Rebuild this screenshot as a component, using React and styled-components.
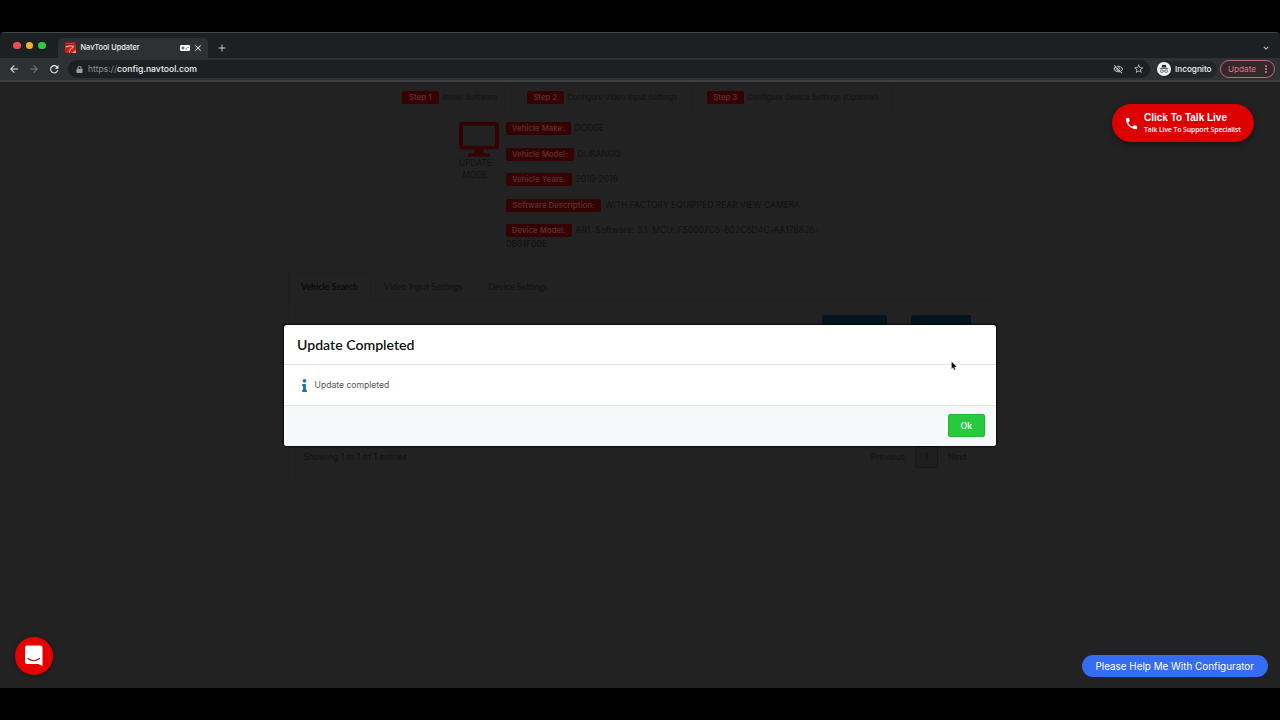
import React from "react";
import styled, { createGlobalStyle } from "styled-components";
import {
  MdArrowBack,
  MdArrowForward,
  MdRefresh,
  MdOutlineVisibilityOff,
  MdStarBorder,
  MdMoreVert,
  MdClose,
  MdAdd,
  MdKeyboardArrowDown,
  MdPhone,
} from "react-icons/md";
import { FaInfo, FaLock } from "react-icons/fa";

const steps = [
  { label: "Step 1", text: "Install Software", width: 125 },
  { label: "Step 2", text: "Configure Video Input Settings", width: 180 },
  { label: "Step 3", text: "Configure Device Settings (Optional)", width: 200 },
];

const details = [
  { label: "Vehicle Make:", text: "DODGE", width: 64.5 },
  { label: "Vehicle Model:", text: "DURANGO", width: 67.5 },
  { label: "Vehicle Years:", text: "2010-2016", width: 65.5 },
  {
    label: "Software Description:",
    text: "WITH FACTORY EQUIPPED REAR VIEW CAMERA",
    width: 95,
  },
  {
    label: "Device Model:",
    text: "AR1 \u00a0Software: 3.1 \u00a0MCU: F50007C5-602C6D4C-AA178826-",
    rest: "0B01F00E",
    width: 65.5,
    spacing: 0.06,
  },
];

export default function App() {
  return (
    <>
      <GlobalStyle />
      <Screen>
        <Browser>
          <TabStrip>
            <Lights>
              <Light $color="#ee4b55" />
              <Light $color="#f6b02f" />
              <Light $color="#2fcb45" />
            </Lights>
            <BrowserTab>
              <Favicon />
              <TabTitle>NavTool Updater</TabTitle>
              <Gamepad />
              <MdClose size={10} color="#e8eaed" />
            </BrowserTab>
            <NewTab>
              <MdAdd size={12} />
            </NewTab>
            <TabSearch>
              <MdKeyboardArrowDown size={10} />
            </TabSearch>
          </TabStrip>
          <Toolbar>
            <NavIcons>
              <MdArrowBack size={12} color="#e8eaed" />
              <MdArrowForward size={12} color="#73767a" />
              <MdRefresh size={12.5} color="#e8eaed" />
            </NavIcons>
            <AddressBar>
              <FaLock size={7} color="#9aa0a6" />
              <Url>
                https://<Host>config.navtool.com</Host>
              </Url>
              <AddressIcons>
                <MdOutlineVisibilityOff size={10.5} />
                <MdStarBorder size={11.5} />
              </AddressIcons>
            </AddressBar>
            <Incognito>
              <IncognitoIcon />
              Incognito
            </Incognito>
            <UpdateButton>
              Update
              <MdMoreVert size={12} />
            </UpdateButton>
          </Toolbar>

          <Page>
            <Steps>
              {steps.map((step) => (
                <Step key={step.label} $width={step.width}>
                  <Badge $width={36.5}>{step.label}</Badge>
                  <StepText>{step.text}</StepText>
                </Step>
              ))}
            </Steps>

            <Device>
              <Mode>
                <MonitorIcon />
                <ModeText>UPDATE MODE</ModeText>
              </Mode>
              <Details>
                {details.map((item) => (
                  <Detail key={item.label} $spacing={item.spacing}>
                    <DetailLine>
                      <Badge $width={item.width}>{item.label}</Badge>
                      <span>{item.text}</span>
                    </DetailLine>
                    {item.rest}
                  </Detail>
                ))}
              </Details>
            </Device>

            <Tabs>
              <TabItem $active $width={83}>
                Vehicle Search
              </TabItem>
              <TabItem $width={104}>Video Input Settings</TabItem>
              <TabItem $width={85}>Device Settings</TabItem>
            </Tabs>
            <Panel>
              <PanelRow>
                <RowButton $width={65} />
                <RowButton $width={60} />
              </PanelRow>
              <PanelFooter>
                <Entries>Showing 1 to 1 of 1 entries</Entries>
                <Pager>
                  Previous
                  <PageNumber>1</PageNumber>
                  Next
                </Pager>
              </PanelFooter>
            </Panel>

            <Modal>
              <ModalHeader>Update Completed</ModalHeader>
              <ModalBody>
                <FaInfo size={13} color="#1b75a6" />
                <Message>Update completed</Message>
              </ModalBody>
              <ModalFooter>
                <OkButton>Ok</OkButton>
              </ModalFooter>
            </Modal>

            <TalkLive>
              <MdPhone size={15} />
              <div>
                <TalkTitle>Click To Talk Live</TalkTitle>
                <TalkText>Talk Live To Support Specialist</TalkText>
              </div>
            </TalkLive>
            <ChatButton>
              <ChatIcon />
            </ChatButton>
            <HelpButton>Please Help Me With Configurator</HelpButton>
            <Cursor />
          </Page>
        </Browser>
      </Screen>
    </>
  );
}

function Favicon() {
  return (
    <svg width="11" height="11" viewBox="0 0 11 11">
      <rect width="11" height="11" rx="1" fill="#c5211d" />
      <rect width="11" height="2.6" fill="#8c1513" />
      <path d="M1 1.4h9" stroke="#e98a80" strokeWidth=".7" strokeDasharray="1.2 .5" />
      <path d="M.8 5Q4 3.400 8.400 4.200Q8.600 6 5.400 7L4.400 10.400" fill="none" stroke="#f5c8bd" strokeWidth="1" />
      <path d="M6.500 11L11 8v3z" fill="#e9a24b" />
    </svg>
  );
}

function Gamepad() {
  return (
    <GamepadSvg width="10" height="6" viewBox="0 0 10 6">
      <rect width="10" height="6" rx="1.2" fill="#fff" />
      <path d="M1.5 3h3M3 1.5v3" stroke="#2d3033" strokeWidth=".9" />
      <circle cx="6.3" cy="3.8" r=".65" fill="#2d3033" />
      <circle cx="8" cy="2.3" r=".65" fill="#2d3033" />
    </GamepadSvg>
  );
}

function IncognitoIcon() {
  return (
    <svg width="14" height="14" viewBox="0 0 14 14">
      <circle cx="7" cy="7" r="7" fill="#f1f3f4" />
      <path d="M4.5 5.6l.8-2.6q.2-.5.7-.3l1 .3 1-.3q.5-.2.7.3l.8 2.6z" fill="#26282b" />
      <path d="M2.7 6.6h8.6" stroke="#26282b" strokeWidth=".8" />
      <circle cx="4.8" cy="9.2" r="1.35" fill="none" stroke="#26282b" strokeWidth=".6" />
      <circle cx="9.2" cy="9.2" r="1.35" fill="none" stroke="#26282b" strokeWidth=".6" />
      <path d="M6.1 9q.9-.5 1.8 0" fill="none" stroke="#26282b" strokeWidth=".6" />
    </svg>
  );
}

function MonitorIcon() {
  return (
    <svg width="40" height="35" viewBox="0 0 40 35">
      <path
        fillRule="evenodd"
        d="M3 0h34a3 3 0 0 1 3 3v21.500a3 3 0 0 1-3 3H3a3 3 0 0 1-3-3V3a3 3 0 0 1 3-3zM4 3.800v20h32v-20z"
        fill="#350204"
      />
      <path d="M16 27h8l.8 4.200h4.700a1.700 1.700 0 0 1 0 3.400h-19a1.700 1.700 0 0 1 0-3.400h4.700z" fill="#350204" />
    </svg>
  );
}

function ChatIcon() {
  return (
    <svg width="20" height="22" viewBox="0 0 20 22">
      <path d="M3 .5h13.500a2 2 0 0 1 2 2V21l-4.200-2H3a2 2 0 0 1-2-2V2.500a2 2 0 0 1 2-2z" fill="#fff" />
      <path d="M4 13.500q5.700 4.400 11.500 0" fill="none" stroke="#a30d0d" strokeWidth="1.100" strokeLinecap="round" />
    </svg>
  );
}

function Cursor() {
  return (
    <CursorSvg width="7" height="10" viewBox="0 0 7 10">
      <path d="M.5.5v7.400l1.600-1.500 1.100 2.700 1.300-.6-1.100-2.500h2.400z" fill="#000" stroke="#fff" strokeWidth=".3" />
    </CursorSvg>
  );
}

const GlobalStyle = createGlobalStyle`
  * {
    box-sizing: border-box;
  }
  body {
    margin: 0;
    background: #000;
    font-family: Inter, "Liberation Sans", sans-serif;
  }
  svg {
    display: block;
    flex-shrink: 0;
  }
`;

const Screen = styled.div`
  width: 1280px;
  height: 720px;
  padding: 32px 0;
  background: #000;
  overflow: hidden;
`;
const Browser = styled.div`
  display: flex;
  flex-direction: column;
  height: 656px;
  border-top: 1px solid #45484a;
  border-radius: 5px 5px 0 0;
  background: #1d2022;
  overflow: hidden;
`;

const TabStrip = styled.div`
  display: flex;
  align-items: flex-end;
  height: 25px;
  padding-left: 13px;
`;
const Lights = styled.div`
  display: flex;
  align-items: center;
  gap: 5px;
  height: 25px;
  width: 45px;
`;
const Light = styled.span`
  width: 7.6px;
  height: 7.6px;
  border-radius: 50%;
  background: ${(props) => props.$color};
`;
const BrowserTab = styled.div`
  display: flex;
  align-items: center;
  width: 150px;
  height: 20px;
  padding: 0 5px 1px 7px;
  border-radius: 5px 5px 0 0;
  background: #2e3134;
`;
const TabTitle = styled.span`
  flex: 1;
  margin: 0 0 1px 4.5px;
  color: #f1f3f4;
  font-size: 7.4px;
  font-weight: 500;
`;
const GamepadSvg = styled.svg`
  margin-right: 3px;
`;
const NewTab = styled.div`
  margin: 0 0 4px 8px;
  color: #c6c9cc;
`;
const TabSearch = styled.div`
  margin: 0 9px 5px auto;
  color: #d5d7da;
`;

const Toolbar = styled.div`
  display: flex;
  align-items: center;
  height: 24px;
  padding: 0 5px 0 8px;
  border-bottom: 2px solid #3d4042;
  background: #2e3134;
`;
const NavIcons = styled.div`
  display: flex;
  gap: 8px;
  width: 60px;
`;
const AddressBar = styled.div`
  display: flex;
  align-items: center;
  width: 1082px;
  height: 18px;
  padding: 0 6px 0 7.5px;
  border-radius: 9px;
  background: #1d2022;
`;
const Url = styled.span`
  margin-left: 5.5px;
  color: #8b8f93;
  font-size: 8.65px;
`;
const Host = styled.span`
  color: #f1f3f4;
  font-weight: 500;
`;
const AddressIcons = styled.div`
  display: flex;
  align-items: center;
  gap: 9px;
  margin-left: auto;
  color: #c6c9cc;
`;
const Incognito = styled.div`
  display: flex;
  align-items: center;
  gap: 4.5px;
  width: 60px;
  height: 17px;
  margin-left: 6.5px;
  border-radius: 9px;
  background: #232629;
  color: #f1f3f4;
  font-size: 8.2px;
  font-weight: 500;
`;
const UpdateButton = styled.div`
  display: flex;
  align-items: center;
  justify-content: space-between;
  width: 55px;
  height: 18px;
  margin-left: 3.5px;
  padding: 0 2px 0 7px;
  border: 1px solid #bb6c74;
  border-radius: 9px;
  background: #35282c;
  color: #d77a83;
  font-size: 8.2px;
`;

const Page = styled.main`
  position: relative;
  flex: 1;
  background: #222;
  color: #111;
`;

const Steps = styled.div`
  display: flex;
  width: 505px;
  margin-left: 387px;
`;
const Step = styled.div`
  display: flex;
  align-items: center;
  width: ${(props) => props.$width}px;
  height: 30px;
  padding-left: 15px;
  border-right: 1px solid #202020;
`;
const StepText = styled.span`
  margin-left: 3.8px;
  font-size: 7.6px;
  white-space: nowrap;
`;
const Badge = styled.span`
  display: inline-flex;
  align-items: center;
  justify-content: center;
  flex-shrink: 0;
  width: ${(props) => props.$width}px;
  height: 13px;
  border-radius: 2px;
  background: #350204;
  color: #5c2c2e;
  font-size: 7.8px;
  font-weight: 600;
  letter-spacing: 0;
  white-space: nowrap;
`;

const Device = styled.div`
  display: flex;
  height: 161px;
  padding: 10px 0 0 459px;
`;
const Mode = styled.div`
  width: 47px;
`;
const ModeText = styled.div`
  width: 32px;
  margin-top: 1px;
  font-size: 8.4px;
  line-height: 11.7px;
  text-align: center;
`;
const Details = styled.div`
  display: flex;
  flex-direction: column;
  gap: 12px;
  width: 318px;
`;
const Detail = styled.div`
  font-size: 8.5px;
  letter-spacing: ${(props) => props.$spacing || 0}px;
  line-height: 13.5px;
`;
const DetailLine = styled.div`
  display: flex;
  align-items: center;
  gap: 4px;
  height: 13.5px;
  white-space: nowrap;
`;

const Tabs = styled.div`
  display: flex;
  width: 703px;
  height: 28px;
  margin-left: 288px;
  border-bottom: 1px solid #1e1e1e;
`;
const TabItem = styled.div`
  width: ${(props) => props.$width}px;
  height: 28px;
  padding-left: 12px;
  border: 1px solid ${(props) => (props.$active ? "#1f1f1f" : "transparent")};
  border-bottom-color: ${(props) => (props.$active ? "#222" : "transparent")};
  color: ${(props) => (props.$active ? "#0a0a0a" : "#111")};
  font-family: Lato, sans-serif;
  font-size: 8.8px;
  font-weight: ${(props) => (props.$active ? 700 : 400)};
  line-height: 26px;
  white-space: nowrap;
`;
const Panel = styled.div`
  width: 703px;
  height: 184px;
  margin-left: 288px;
  padding: 14px 19px 0 14.5px;
  border: 1px solid #202020;
  border-top: 0;
`;
const PanelRow = styled.div`
  display: flex;
  justify-content: flex-end;
  gap: 24px;
  height: 131px;
`;
const RowButton = styled.span`
  width: ${(props) => props.$width}px;
  height: 20px;
  border-radius: 2px;
  background: #06151d;
`;
const PanelFooter = styled.div`
  display: flex;
  align-items: center;
  justify-content: space-between;
  height: 22px;
  font-size: 8.4px;
`;
const Entries = styled.span`
  letter-spacing: 0.08px;
`;
const Pager = styled.div`
  display: flex;
  align-items: center;
  gap: 10px;
  margin-right: 4.5px;
`;
const PageNumber = styled.span`
  width: 23px;
  height: 22px;
  border: 1px solid #181818;
  border-radius: 1px;
  background: #1e1e1e;
  line-height: 20px;
  text-align: center;
`;

const Modal = styled.section`
  position: absolute;
  top: 243px;
  left: 284px;
  width: 712px;
  height: 121px;
  border-radius: 3px;
  background: #fff;
  box-shadow: 0 0 2px 1px rgba(0, 0, 0, 0.75);
  overflow: hidden;
`;
const ModalHeader = styled.h2`
  height: 40px;
  margin: 0;
  padding-left: 13px;
  border-bottom: 1px solid #dfe3e4;
  color: #111;
  font-family: Lato, sans-serif;
  font-size: 14.1px;
  font-weight: 600;
  line-height: 40px;
`;
const ModalBody = styled.div`
  display: flex;
  align-items: center;
  gap: 3.5px;
  height: 41px;
  padding-left: 14px;
  border-bottom: 1px solid #dfe3e4;
`;
const Message = styled.span`
  margin-bottom: 1px;
  color: #555;
  font-size: 8.6px;
`;
const ModalFooter = styled.div`
  display: flex;
  align-items: center;
  justify-content: flex-end;
  height: 40px;
  padding: 0 11px 1px 0;
  background: #f6f9fa;
`;
const OkButton = styled.button`
  width: 37.5px;
  height: 23px;
  padding: 0;
  border: 1px solid #22b934;
  border-radius: 2px;
  background: #27c93f;
  color: #fff;
  font-family: Inter, sans-serif;
  font-size: 8.8px;
  font-weight: 500;
`;

const TalkLive = styled.div`
  position: absolute;
  top: 22px;
  right: 26px;
  display: flex;
  align-items: center;
  gap: 5.5px;
  width: 142px;
  height: 38px;
  padding-left: 11.5px;
  border-radius: 19px;
  background: #dc0000;
  box-shadow: 0 2px 7px rgba(0, 0, 0, 0.45);
  color: #fff;
  white-space: nowrap;
`;
const TalkTitle = styled.div`
  font-family: "Liberation Sans", sans-serif;
  font-size: 10px;
  font-weight: 700;
  line-height: 13px;
`;
const TalkText = styled.div`
  font-family: "Open Sans", sans-serif;
  font-size: 6.8px;
  font-weight: 600;
  letter-spacing: -0.07px;
  line-height: 11px;
`;
const ChatButton = styled.div`
  position: absolute;
  bottom: 13.5px;
  left: 15px;
  display: flex;
  align-items: center;
  justify-content: center;
  width: 37.5px;
  height: 37.5px;
  border-radius: 50%;
  background: #e60000;
  box-shadow: 0 1px 5px rgba(0, 0, 0, 0.35);
`;
const HelpButton = styled.div`
  position: absolute;
  right: 12.5px;
  bottom: 11px;
  width: 185.5px;
  height: 22px;
  border-radius: 11px;
  background: #356cf2;
  color: #fff;
  font-size: 9.9px;
  line-height: 22px;
  text-align: center;
  white-space: nowrap;
`;
const CursorSvg = styled.svg`
  position: absolute;
  top: 279px;
  left: 951.4px;
`;
